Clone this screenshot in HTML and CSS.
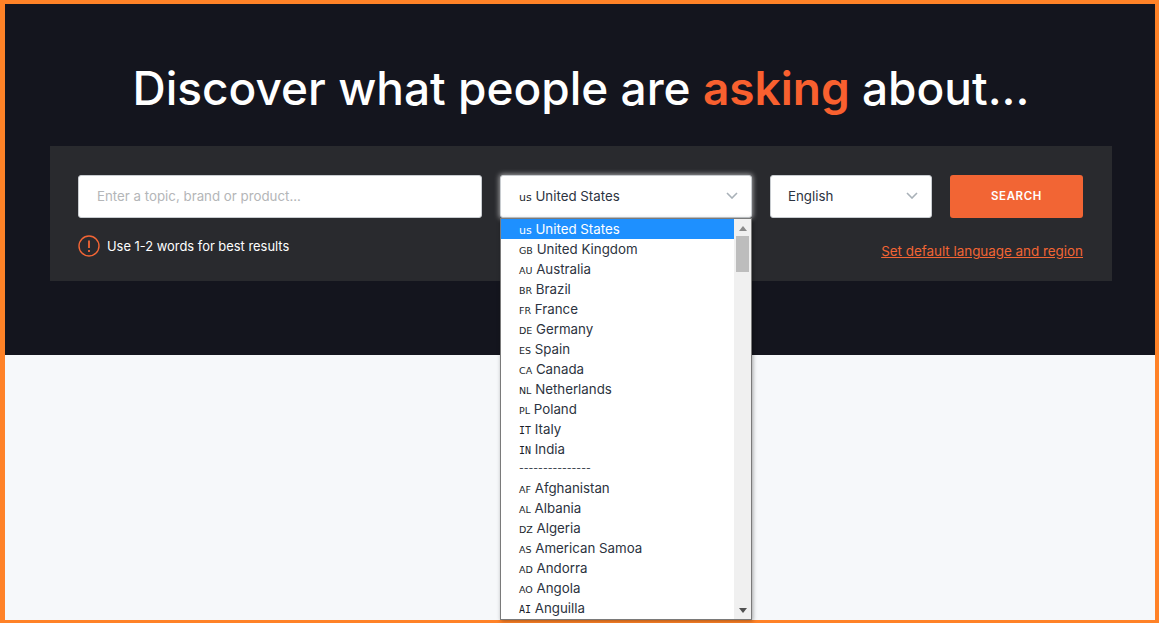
FILE: index.html
```html
<!DOCTYPE html>
<html lang="en">
<head>
<meta charset="utf-8">
<title>Discover what people are asking about</title>
<link rel="stylesheet" href="styles.css">
</head>
<body>
<div class="frame">
  <section class="hero">
    <h1 class="title">Discover what people are <span class="accent">asking</span> about...</h1>
    <div class="panel">
      <div class="controls">
        <div class="field field-topic">Enter a topic, brand or product...</div>
        <div class="field-wrap">
          <div class="field field-region field-focus">
            <span><span class="code code-low">us</span> United States</span>
            <svg class="chev" viewBox="0 0 12 7" width="12" height="7"><path d="M1 1l5 5 5-5" fill="none" stroke="#a9b1b8" stroke-width="1.6"/></svg>
          </div>
          <div class="dropdown">
            <ul class="options">
              <li class="option selected"><span class="code code-low">us</span> United States</li>
              <li class="option"><span class="code">GB</span> United Kingdom</li>
              <li class="option"><span class="code">AU</span> Australia</li>
              <li class="option"><span class="code">BR</span> Brazil</li>
              <li class="option"><span class="code">FR</span> France</li>
              <li class="option"><span class="code">DE</span> Germany</li>
              <li class="option"><span class="code">ES</span> Spain</li>
              <li class="option"><span class="code">CA</span> Canada</li>
              <li class="option"><span class="code">NL</span> Netherlands</li>
              <li class="option"><span class="code">PL</span> Poland</li>
              <li class="option"><span class="code code-i">IT</span> Italy</li>
              <li class="option"><span class="code code-i">IN</span> India</li>
              <li class="option divider">---------------</li>
              <li class="option"><span class="code">AF</span> Afghanistan</li>
              <li class="option"><span class="code">AL</span> Albania</li>
              <li class="option"><span class="code">DZ</span> Algeria</li>
              <li class="option"><span class="code">AS</span> American Samoa</li>
              <li class="option"><span class="code">AD</span> Andorra</li>
              <li class="option"><span class="code">AO</span> Angola</li>
              <li class="option"><span class="code code-i">AI</span> Anguilla</li>
            </ul>
            <div class="scrollbar">
              <svg class="arrow" viewBox="0 0 8 5" width="8" height="5"><path d="M4 0l4 5H0z" fill="#8a8a8a"/></svg>
              <div class="thumb"></div>
              <svg class="arrow arrow-down" viewBox="0 0 8 5" width="8" height="5"><path d="M0 0h8L4 5z" fill="#505050"/></svg>
            </div>
          </div>
        </div>
        <div class="field field-lang">
          <span>English</span>
          <svg class="chev" viewBox="0 0 12 7" width="12" height="7"><path d="M1 1l5 5 5-5" fill="none" stroke="#a9b1b8" stroke-width="1.6"/></svg>
        </div>
        <button class="search" type="button">SEARCH</button>
      </div>
      <div class="foot">
        <div class="hint">
          <svg class="hint-icon" viewBox="0 0 22 22" width="22" height="22"><circle cx="11" cy="11" r="10" fill="none" stroke="#f26535" stroke-width="1.4"/><path d="M11 5.5v7.5M11 15v2" fill="none" stroke="#f26535" stroke-width="1.8"/></svg>
          <span>Use 1-2 words for best results</span>
        </div>
        <a class="default-link" href="#">Set default language and region</a>
      </div>
    </div>
  </section>
  <main class="body-area"></main>
</div>
</body>
</html>
```
FILE: styles.css
```css
* { box-sizing: border-box; }
html, body { margin: 0; height: 100%; }
body {
  font-family: "Inter", "Liberation Sans", sans-serif;
  overflow: hidden;
}
.frame {
  height: 623px;
  border: solid #ff8227;
  border-width: 4px 4px 3px 5px;
  display: flex;
  flex-direction: column;
  background: #f6f8fa;
}
.hero {
  background: #14151e;
  height: 351px;
  padding: 55px 43px 0 45px;
}
.title {
  margin: 0 0 29px;
  height: 58px;
  font-size: 46px;
  line-height: 58px;
  font-weight: 500;
  color: #fff;
  text-align: center;
  white-space: nowrap;
}
.accent { color: #f9602f; font-weight: 600; }
.panel {
  background: #292a2e;
  height: 135px;
  padding: 29px 29px 0 28px;
}
.controls {
  display: flex;
  gap: 18px;
  height: 43px;
}
.field {
  height: 43px;
  background: #fff;
  border-radius: 3px;
  border: 1px solid #c8ccd0;
  display: flex;
  align-items: center;
  justify-content: space-between;
  font-size: 13.3px;
  color: #2c3340;
  padding: 0 13px 2px 18px;
}
.field-topic {
  width: 404px;
  color: #b4b6b8;
  justify-content: flex-start;
}
.field-wrap { position: relative; width: 252px; }
.field-focus { box-shadow: 0 0 5px 1px rgba(255,255,255,.55); }
.field-lang { width: 162px; padding-left: 17px; }
.chev { flex: none; }
.search {
  width: 133px;
  height: 43px;
  border: 0;
  border-radius: 3px;
  background: #f26534;
  color: #fff;
  font: 600 11.5px "Inter", "Liberation Sans", sans-serif;
  letter-spacing: .6px;
  padding-bottom: 2px;
}
.code {
  font-family: "DejaVu Sans", sans-serif;
  font-size: 9.5px;
  color: #1a1f2a;
}
.code-i { font-family: "DejaVu Sans Mono", monospace; font-size: 10px; }
.code-low { font-size: 11px; }
.selected .code { color: #fff; }
.dropdown {
  position: absolute;
  left: 0;
  top: 43px;
  width: 252px;
  height: 402px;
  border: 1px solid #7a7a7a;
  background: #fff;
  display: flex;
  box-shadow: 1px 1px 4px rgba(0,0,0,.35);
  z-index: 5;
}
.options {
  list-style: none;
  margin: 0;
  padding: 0;
  flex: 1;
  overflow: hidden;
  min-width: 0;
}
.option {
  height: 20px;
  line-height: 19px;
  padding: 1px 0 0 18px;
  font-size: 13.3px;
  color: #2c3340;
  white-space: nowrap;
}
.option.divider { height: 19px; line-height: 17px; font-size: 10.4px; }
.selected { background: #1e90ff; color: #fff; }
.scrollbar {
  width: 17px;
  background: #f0f0f0;
  display: flex;
  flex-direction: column;
  align-items: center;
  padding-top: 7px;
}
.thumb {
  width: 13px;
  height: 36px;
  margin-top: 5px;
  background: #bdbdbd;
}
.arrow { flex: none; }
.arrow-down { margin-top: auto; margin-bottom: 6px; }
.foot {
  display: flex;
  justify-content: space-between;
  align-items: flex-start;
  margin-top: 17px;
}
.hint {
  display: flex;
  align-items: center;
  gap: 7px;
  color: #fff;
  font-size: 12.9px;
  height: 22px;
}
.hint-icon { flex: none; }
.default-link {
  margin-top: 7px;
  color: #f26534;
  font-size: 13.4px;
  line-height: 18px;
}
.body-area { flex: 1; }
```
